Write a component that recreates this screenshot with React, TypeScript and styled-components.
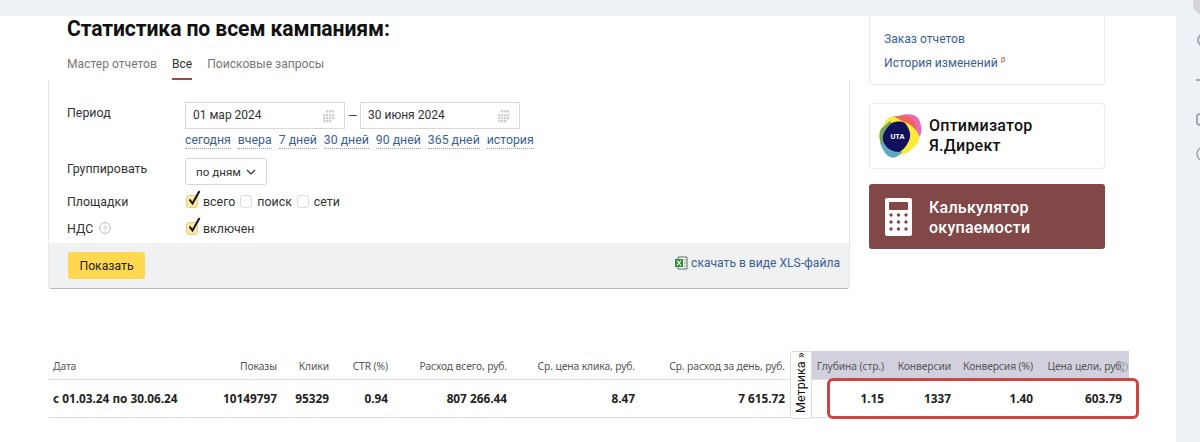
import React from "react";
import styled, { createGlobalStyle } from "styled-components";

const Global = createGlobalStyle`
  html, body { margin: 0; padding: 0; height: 442px; overflow: hidden; background: #eef1f6; }
  * { box-sizing: border-box; }
  body { font-family: Roboto, "Noto Sans", sans-serif; color: #222; font-size: 12.4px; }
`;

const Page = styled.div`
  width: 1200px; height: 442px; display: flex; overflow: hidden; padding-top: 16px; position: relative;
`;
const Sheet = styled.main`
  width: 1176px; height: 426px; background: #fff; padding-left: 48px; flex: none; position: relative;
`;
const Top = styled.div`
  display: flex; height: 273px;
`;
const LeftCol = styled.section`
  width: 802px; flex: none;
`;
const Title = styled.h1`
  margin: 0 0 0 19px; font: 700 21.15px/26px Roboto, sans-serif; color: #111; letter-spacing: -0.1px;
`;
const Tabs = styled.nav`
  display: flex; gap: 15px; margin: 13px 0 0 19px; height: 25px;
`;
const Tab = styled.span<{ $active?: boolean }>`
  font-size: 12.1px; line-height: 19px; height: 25px;
  color: ${p => (p.$active ? "#333" : "#777")};
  border-bottom: ${p => (p.$active ? "2px solid #9a4a4a" : "none")};
`;
const Panel = styled.div`
  width: 802px; height: 209px; border-left: 1px solid #e9e9e9; border-right: 1px solid #e6e6e6; border-bottom: 1px solid #b9b9b9;
  border-radius: 0 0 4px 4px; display: flex; flex-direction: column;
`;
const Form = styled.div`
  flex: 1; padding: 22px 0 0 18px; display: flex; flex-direction: column;
`;
const Row = styled.div<{ $h: number }>`
  display: flex; height: ${p => p.$h}px;
`;
const Label = styled.div`
  width: 118px; flex: none; font-size: 12.4px; line-height: 21px; display: flex; gap: 6px; align-items: flex-start; color: #333;
`;
const Dates = styled.div`
  display: flex; align-items: center; height: 27px;
`;
const DateBox = styled.div`
  width: 160px; height: 27px; border: 1px solid #d9d9d9; padding: 0 7px; font-size: 12px; line-height: 25px; color: #333;
  display: flex; justify-content: space-between; align-items: center;
`;
const Dash = styled.span`
  width: 15px; text-align: center; color: #444;
`;
const QuickLinks = styled.div`
  display: flex; gap: 7px; margin-top: 4px;
`;
const Quick = styled.span`
  color: #3b5f92; font-size: 12.3px; line-height: 15px; border-bottom: 1px dotted #8a9db8;
`;
const Select = styled.div`
  width: 82px; height: 27px; border: 1px solid #d5d5d5; border-radius: 3px; display: flex; align-items: center; justify-content: center; gap: 5px;
  font-size: 11.6px; color: #333;
`;
const Checks = styled.div`
  display: flex; align-items: center; height: 20px; gap: 5px; padding-top: 1px; margin-left: 1px;
`;
const CheckBox = styled.span<{ $on?: boolean }>`
  position: relative; width: 12px; height: 13px; border-radius: 3px; flex: none;
  border: 1px solid ${p => (p.$on ? "#e2cf8c" : "#dcdcdc")};
  background: ${p => (p.$on ? "#fbe8a8" : "#fff")};
`;
const Tick = styled.svg`
  position: absolute; left: 0; top: -6px; width: 15px; height: 17px; overflow: visible;
`;
const CheckText = styled.span`
  font-size: 12.4px; color: #333;
`;
const Footer = styled.div`
  height: 45px; background: #f0f1f3; padding: 9px 9px 0 19px; display: flex; justify-content: space-between; border-radius: 0 0 4px 4px;
`;
const Show = styled.button`
  width: 77px; height: 27px; border: 0; border-radius: 3px; background: #ffd84f; font: 400 12.2px Roboto, sans-serif; color: #222; padding: 0;
`;
const Xls = styled.a`
  display: flex; gap: 3px; align-items: center; height: 22px; color: #3b5f92; font-size: 12.1px;
`;
const RightCol = styled.aside`
  margin-left: 19px; width: 236px; flex: none; display: flex; flex-direction: column;
`;
const LinksCard = styled.div`
  height: 69px; border: 1px solid #ebebeb; border-top: 0; border-radius: 0 0 4px 4px; padding: 15px 0 0 14px; display: flex; flex-direction: column; gap: 8px;
`;
const CardLink = styled.a`
  color: #3b5f92; font-size: 12.1px; line-height: 16px;
`;
const Beta = styled.sup`
  color: #b5504f; font-size: 8px; line-height: 0; margin-left: 3px; vertical-align: 5px;
`;
const PromoCard = styled.div`
  margin-top: 18px; height: 66px; border: 1px solid #ebebeb; border-radius: 4px; display: flex; align-items: center; padding-left: 8px; gap: 7px;
`;
const PromoText = styled.div`
  font: 500 16px/20px Roboto, sans-serif; color: #111; letter-spacing: 0.25px;
`;
const CalcCard = styled.div`
  margin-top: 15px; height: 65px; background: #824848; border-radius: 3px; display: flex; align-items: center; padding-left: 16px; gap: 17px;
`;
const CalcText = styled.div`
  font: 500 16px/20px Roboto, sans-serif; color: #fff; letter-spacing: 0.25px;
  padding-top: 2px;
`;
const Table = styled.div`
  margin-top: 62px; width: 1081px; position: relative; font-family: "Noto Sans", "Open Sans", sans-serif;
`;
const Grid = styled.div`
  display: grid; grid-template-columns: 170px 64px 52px 59px 119px 128px 150px 21px 78px 67px 82px 91px;
`;
const Head = styled.div<{ $alt?: boolean; $left?: boolean }>`
  height: 29px; line-height: 31px; font-size: 10.3px; color: #555; padding: 0 5px; white-space: nowrap;
  letter-spacing: -0.1px;
  text-align: ${p => (p.$left ? "left" : "right")};
  background: ${p => (p.$alt ? "#d3d0dd" : "transparent")};
  border-bottom: 1px solid #ddd;
`;
const Cell = styled.div<{ $left?: boolean }>`
  height: 38px; line-height: 36px; font-size: 11.8px; font-weight: 700; color: #222; padding: 0 5px; white-space: nowrap;
  text-align: ${p => (p.$left ? "left" : "right")};
  border-bottom: 1px solid #ddd;
`;
const LastCell = styled(Cell)`
  padding-right: 7px;
`;
const Gap = styled.div`
  border-bottom: 1px solid #ddd;
`;
const Metrika = styled.div`
  position: absolute; left: 742px; top: 0; width: 22px; height: 68px; background: #fff; border: 1px solid #ddd; border-radius: 3px;
  writing-mode: vertical-rl; transform: rotate(180deg); font: 400 12.6px/20px Roboto, sans-serif; white-space: nowrap; padding-top: 5px; color: #111;
`;
const Help = styled.span`
  position: absolute; left: 1070px; top: 11px; width: 10px; height: 10px; border: 1px solid #999; border-radius: 50%; color: #888;
  font-size: 7px; line-height: 8px; text-align: center;
`;
const RedFrame = styled.div`
  position: absolute; left: 779px; top: 27px; width: 312px; height: 41px; border: 3.5px solid #cc4540; border-radius: 6px; pointer-events: none;
`;
const Strip = styled.div`
  flex: 1; position: relative;
`;
const StripIcon = styled.svg<{ $top: number }>`
  position: absolute; left: 20px; top: ${p => p.$top}px; width: 16px; height: 16px; color: #a3a9b3;
`;
const TopAvatar = styled.span`
  position: absolute; left: 17px; top: -26px; width: 26px; height: 26px; border-radius: 50%; background: #d5d5d5;
`;

const CalIcon = () => (
  <svg width="16" height="14" viewBox="0 0 16 14">
    {[
      [5, 1], [8, 1], [11, 1], [2, 5], [5, 5], [8, 5], [11, 5], [2, 8], [5, 8], [8, 8], [11, 8], [5, 11], [8, 11], [2, 11],
    ].map(([x, y], i) => (
      <rect key={i} x={x} y={y} width="2.4" height="2.4" fill="#d3d3d3" />
    ))}
  </svg>
);

const Checked = () => (
  <CheckBox $on>
    <Tick viewBox="0 0 15 17">
      <path d="M2.5 9.5 L5.5 13.5 L12.5 1" fill="none" stroke="#111" strokeWidth="2" />
    </Tick>
  </CheckBox>
);

const Logo = () => (
  <svg width="44" height="46" viewBox="0 0 44 46">
    <path d="M21 3c7-3 16-2 19 2 3 5 5 12 2 18-3 4-8 6-13 5L16 14z" fill="#ef6ab4" />
    <path d="M11 5c8-3 16-3 22 0 5 4 6 10 4 17l-20 6L8 14z" fill="#f0645c" />
    <path d="M5 13C8 6 12 3 17 4l7 4c8 2 14 8 17 14 1 7-3 11-8 15-6 5-14 7-19 3C7 36 1 30 1 22c0-4 2-6 4-9z" fill="#fdea3a" />
    <path d="M3 16 12 8l14 20-3 11c-5 3-12 2-16-2C2 33 0 22 3 16z" fill="#6ba36a" />
    <path d="M2 30c2 5 5 12 10 14 5 2 9-1 12-5l-8-8z" fill="#5fa9c2" />
    <g transform="translate(0 2)">
      <path d="M14 8C18 6 24 6 27 8c3 4 6 9 5 14-1 6-6 13-11 15-6 0-12-3-15-9-2-5-1-8 1-12 2-3 4-6 7-8z" fill="#12105c" />
      <text x="19.5" y="24" textAnchor="middle" fontFamily="Roboto, sans-serif" fontWeight="700" fontSize="7.5" fill="#fff">UTA</text>
    </g>
  </svg>
);

const Calc = () => (
  <svg width="27" height="38" viewBox="0 0 27 38">
    <rect width="27" height="38" rx="2" fill="#fff" />
    <rect x="4" y="4" width="19" height="8" rx="1" fill="#824848" />
    {[17, 24, 31].flatMap(y => [6, 13.5, 21].map(x => <circle key={`${x}-${y}`} cx={x} cy={y} r="1.7" fill="#824848" />))}
  </svg>
);

const XlsIcon = () => (
  <svg width="14" height="14" viewBox="0 0 14 14">
    <path d="M4 1h9v12H4z" fill="#fff" stroke="#666" />
    <path d="M1 3h8v8H1z" fill="#2e8b3d" />
    <path d="M3 4.5 7 9.5M7 4.5 3 9.5" stroke="#fff" strokeWidth="1.2" />
    <path d="M10 4h2M10 7h2M10 10h2" stroke="#5aa65f" />
  </svg>
);

export default function App() {
  return (
    <Page>
      <Global />
      <Sheet>
        <Top>
          <LeftCol>
            <Title>Статистика по всем кампаниям:</Title>
            <Tabs>
              <Tab>Мастер отчетов</Tab>
              <Tab $active>Все</Tab>
              <Tab>Поисковые запросы</Tab>
            </Tabs>
            <Panel>
              <Form>
                <Row $h={56}>
                  <Label>Период</Label>
                  <div>
                    <Dates>
                      <DateBox>01 мар 2024<CalIcon /></DateBox>
                      <Dash>—</Dash>
                      <DateBox>30 июня 2024<CalIcon /></DateBox>
                    </Dates>
                    <QuickLinks>
                      <Quick>сегодня</Quick>
                      <Quick>вчера</Quick>
                      <Quick>7 дней</Quick>
                      <Quick>30 дней</Quick>
                      <Quick>90 дней</Quick>
                      <Quick>365 дней</Quick>
                      <Quick>история</Quick>
                    </QuickLinks>
                  </div>
                </Row>
                <Row $h={33}>
                  <Label>Группировать</Label>
                  <Select>
                    по дням
                    <svg width="10" height="6" viewBox="0 0 10 6"><path d="M1 1l4 4 4-4" fill="none" stroke="#333" strokeWidth="1.2" /></svg>
                  </Select>
                </Row>
                <Row $h={27}>
                  <Label>Площадки</Label>
                  <Checks>
                    <Checked /><CheckText>всего</CheckText>
                    <CheckBox /><CheckText>поиск</CheckText>
                    <CheckBox /><CheckText>сети</CheckText>
                  </Checks>
                </Row>
                <Row $h={20}>
                  <Label>
                    НДС
                    <svg width="12" height="12" viewBox="0 0 12 12" style={{ marginTop: 4 }}>
                      <circle cx="6" cy="6" r="5.4" fill="none" stroke="#bbb" />
                      <text x="6" y="8.8" textAnchor="middle" fontSize="8" fill="#aaa" fontFamily="Roboto, sans-serif">?</text>
                    </svg>
                  </Label>
                  <Checks><Checked /><CheckText>включен</CheckText></Checks>
                </Row>
              </Form>
              <Footer>
                <Show>Показать</Show>
                <Xls><XlsIcon />скачать в виде XLS-файла</Xls>
              </Footer>
            </Panel>
          </LeftCol>
          <RightCol>
            <LinksCard>
              <CardLink>Заказ отчетов</CardLink>
              <CardLink>История изменений<Beta>β</Beta></CardLink>
            </LinksCard>
            <PromoCard>
              <Logo />
              <PromoText>Оптимизатор<br />Я.Директ</PromoText>
            </PromoCard>
            <CalcCard>
              <Calc />
              <CalcText>Калькулятор<br />окупаемости</CalcText>
            </CalcCard>
          </RightCol>
        </Top>
        <Table>
          <Grid>
            <Head $left>Дата</Head>
            <Head>Показы</Head>
            <Head>Клики</Head>
            <Head>CTR (%)</Head>
            <Head>Расход всего, руб.</Head>
            <Head>Ср. цена клика, руб.</Head>
            <Head>Ср. расход за день, руб.</Head>
            <Gap />
            <Head $alt>Глубина (стр.)</Head>
            <Head $alt>Конверсии</Head>
            <Head $alt>Конверсия (%)</Head>
            <Head $alt>Цена цели, руб.</Head>
            <Cell $left>с 01.03.24 по 30.06.24</Cell>
            <Cell>10149797</Cell>
            <Cell>95329</Cell>
            <Cell>0.94</Cell>
            <Cell>807 266.44</Cell>
            <Cell>8.47</Cell>
            <Cell>7 615.72</Cell>
            <Gap />
            <Cell>1.15</Cell>
            <Cell>1337</Cell>
            <Cell>1.40</Cell>
            <LastCell>603.79</LastCell>
          </Grid>
          <Metrika>Метрика »</Metrika>
          <Help>?</Help>
          <RedFrame />
        </Table>
      </Sheet>
      <Strip>
        <TopAvatar />
        <StripIcon $top={17} viewBox="0 0 16 16"><circle cx="8" cy="7" r="6" fill="none" stroke="currentColor" strokeWidth="2" /></StripIcon>
        <StripIcon $top={56} viewBox="0 0 16 16"><path d="M0 8h8" stroke="currentColor" strokeWidth="2" /></StripIcon>
        <StripIcon $top={96} viewBox="0 0 16 16"><rect x="1" y="2" width="12" height="11" rx="3" fill="none" stroke="currentColor" strokeWidth="2" /></StripIcon>
        <StripIcon $top={130} viewBox="0 0 16 16"><circle cx="8" cy="8" r="7" fill="none" stroke="currentColor" strokeWidth="1.6" /></StripIcon>
      </Strip>
    </Page>
  );
}
